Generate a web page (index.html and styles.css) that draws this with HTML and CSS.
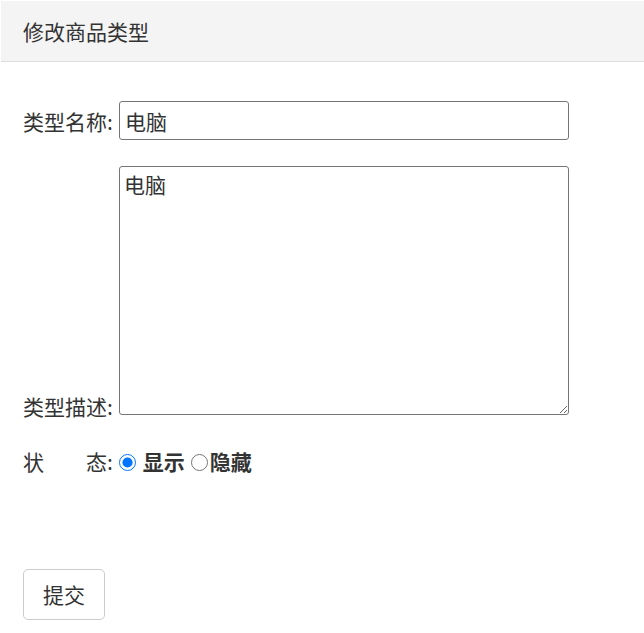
FILE: index.html
```html
<!DOCTYPE html>
<html lang="zh-CN">
<head>
  <meta charset="UTF-8" />
  <meta name="viewport" content="width=device-width, initial-scale=1.0" />
  <title>修改商品类型</title>
  <link rel="stylesheet" href="styles.css">
</head>
<body>
  <div class="panel">
    <div class="panel-heading">修改商品类型</div>
    <form class="panel-body" action="#" method="post">
      <div class="row">
        <label class="field-label" for="typeName">类型名称:</label><input id="typeName" class="text-input" type="text" name="typeName" value="电脑">
      </div>
      <div class="row">
        <label class="field-label" for="typeDesc">类型描述:</label><textarea id="typeDesc" class="text-area" name="typeDesc">电脑</textarea>
      </div>
      <div class="row">
        <label class="field-label">状&emsp;&emsp;态:</label><input class="radio first" type="radio" name="status" value="1" checked> <b>显示</b><input class="radio" type="radio" name="status" value="0"><b>隐藏</b>
      </div>
      <div class="actions">
        <button class="btn" type="submit">提交</button>
      </div>
    </form>
  </div>
</body>
</html>
```

FILE: styles.css
```css
html, body {
  margin: 0;
  padding: 0;
  background: #fff;
}
body {
  font-family: "Noto Sans CJK SC", "Microsoft YaHei", sans-serif;
  font-size: 21px;
  line-height: 1.4;
  color: #333;
}
.panel {
  padding: 1px 0 0 1px;
}
.panel-heading {
  height: 60px;
  line-height: 60px;
  padding: 0 22px;
  background: #f4f4f4;
  border-bottom: 1px solid #ddd;
}
.panel-body {
  margin: 0;
  padding: 39px 22px 0;
}
.row {
  margin-bottom: 26px;
}
.row:last-of-type {
  margin-bottom: 0;
}
.field-label {
  display: inline-block;
  width: 96px;
}
.text-input,
.text-area {
  box-sizing: border-box;
  width: 450px;
  margin: 0;
  font-family: inherit;
  font-size: 21px;
  color: #333;
  border: 1px solid #767676;
  border-radius: 3px;
  vertical-align: baseline;
}
.text-input {
  height: 39px;
  padding: 0 5px;
}
.text-area {
  height: 249px;
  padding: 3px 4px;
  line-height: 1.4;
  resize: both;
}
.radio {
  width: 17px;
  height: 17px;
  margin: 0 2px 0 6px;
  vertical-align: -1px;
}
.radio.first {
  margin-left: 0;
}
.actions {
  margin-top: 92px;
}
.btn {
  box-sizing: border-box;
  height: 51px;
  padding: 0 19px;
  font-family: inherit;
  font-size: 21px;
  color: #333;
  background: #fff;
  border: 1px solid #ccc;
  border-radius: 5px;
}
```
